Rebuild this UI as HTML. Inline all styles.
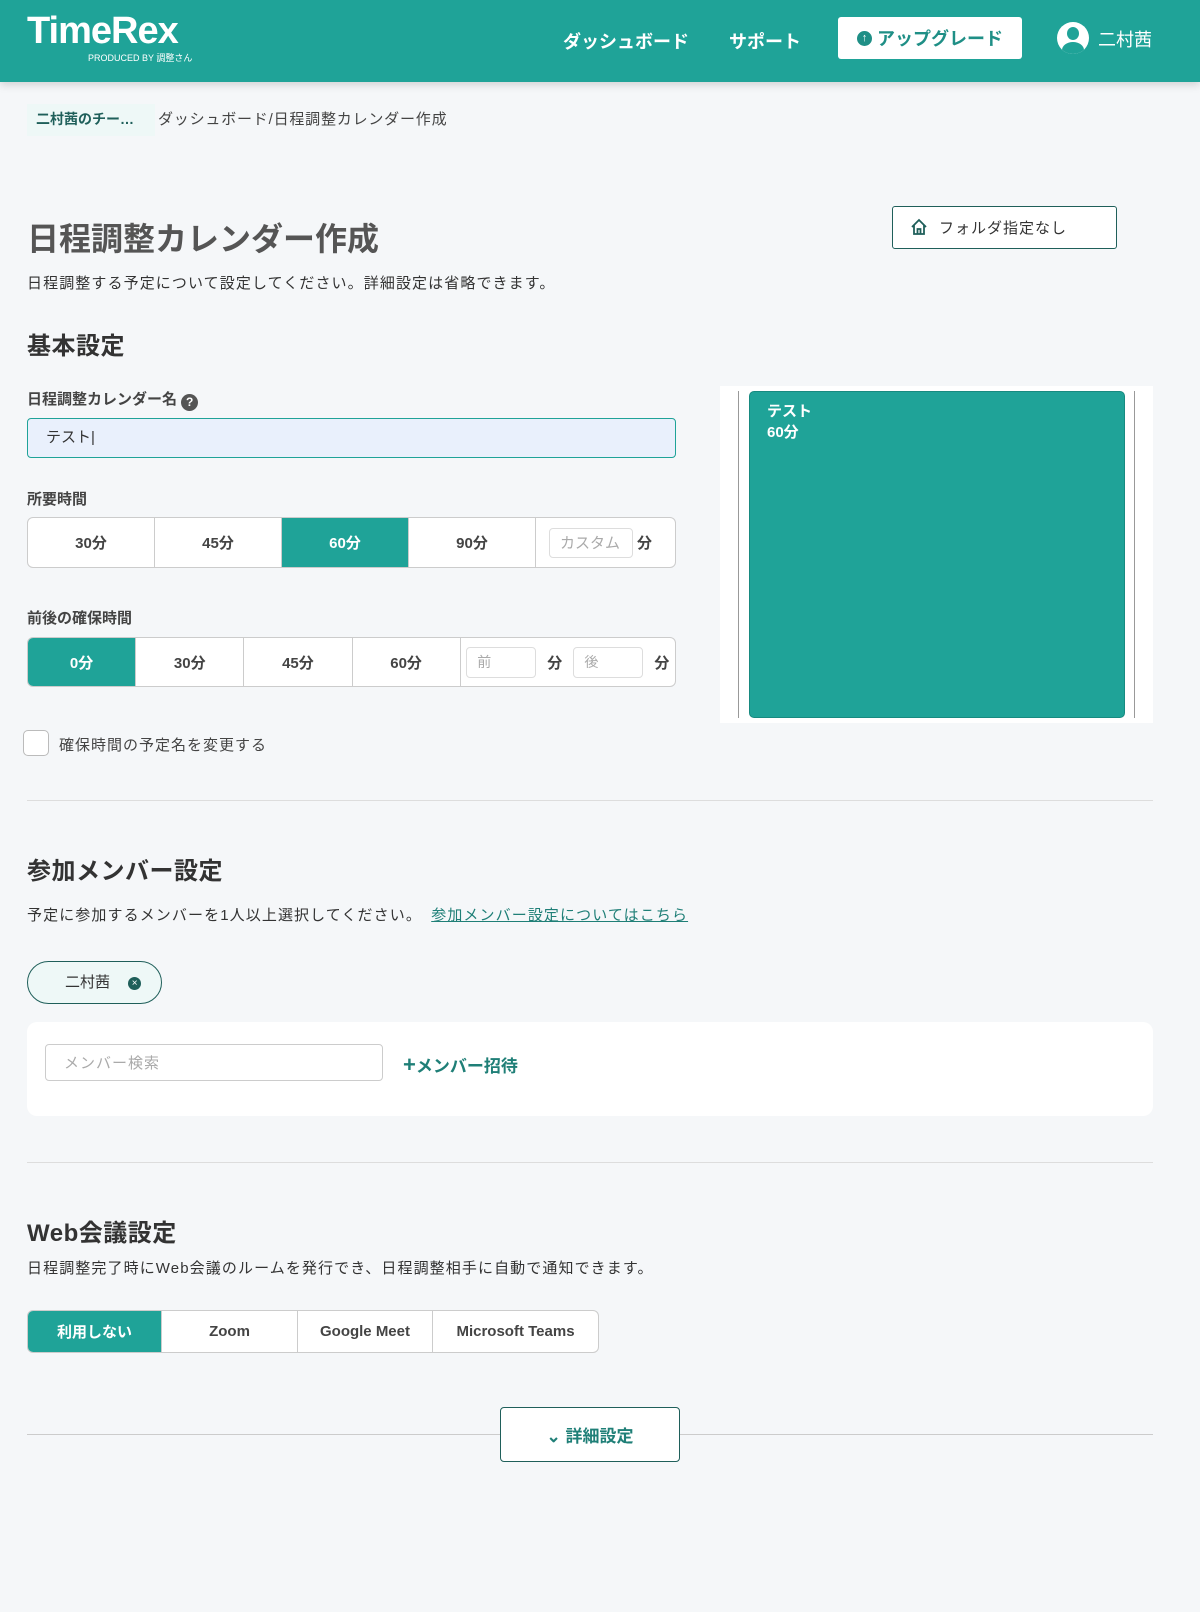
<!DOCTYPE html>
<html><head><meta charset="utf-8"><style>
*{box-sizing:border-box;margin:0;padding:0}
body{width:1200px;height:1612px;background:#f5f7f9;font-family:"Liberation Sans","Noto Sans CJK JP",sans-serif;color:#333;position:relative;overflow:hidden}
.a{position:absolute}
.hdr{left:0;top:0;width:1200px;height:82px;background:#1fa398;box-shadow:0 3px 8px rgba(0,0,0,.15)}
.bg{display:flex;border:1px solid #ccc;border-radius:6px;background:#fff;overflow:hidden}
.bg>div{flex:1;display:flex;align-items:center;justify-content:center;font-weight:bold;font-size:15px;color:#444;border-right:1px solid #ccc}
.bg>div:last-child{border-right:none}
.bg .on{background:#1fa398;color:#fff}
.inp{border:1px solid #ddd;border-radius:4px;color:#aaa;font-size:14px;padding-left:10px;display:flex;align-items:center;background:#fff}
h2{font-size:24px;font-weight:bold;color:#333;letter-spacing:.5px}
.lbl{font-size:15px;font-weight:bold;color:#444}
.t{font-size:15px;color:#333;letter-spacing:1.1px}
</style></head><body>
<div class="a hdr">
 <div class="a" style="left:27px;top:10px;color:#fff;font-size:38px;font-weight:bold;letter-spacing:-1px">TimeRex</div>
 <div class="a" style="left:88px;top:51px;color:#fff;font-size:9px">PRODUCED BY 調整さん</div>
 <div class="a" style="left:563px;top:28px;color:#fff;font-size:18px;font-weight:bold">ダッシュボード</div>
 <div class="a" style="left:729px;top:28px;color:#fff;font-size:18px;font-weight:bold">サポート</div>
 <div class="a" style="left:838px;top:17px;width:184px;height:42px;background:#fff;border-radius:3px;color:#1f8f86;font-size:18px;font-weight:bold;display:flex;align-items:center;justify-content:center"><span style="display:inline-block;width:15px;height:15px;border-radius:50%;background:#1f8f86;color:#fff;font-size:11px;line-height:15px;text-align:center;margin-right:5px">↑</span>アップグレード</div>
 <div class="a" style="left:1057px;top:22px;width:32px;height:32px;border-radius:50%;background:#fff;overflow:hidden"><div class="a" style="left:10px;top:5px;width:12px;height:13px;border-radius:50%;background:#1fa398"></div><div class="a" style="left:5px;top:20px;width:22px;height:16px;border-radius:50%;background:#1fa398"></div></div>
 <div class="a" style="left:1098px;top:26px;color:#fff;font-size:18px">二村茜</div>
</div>
<div class="a" style="left:27px;top:104px;width:128px;height:32px;background:#eef8f7"></div>
<div class="a" style="left:36px;top:109px;font-size:14px;font-weight:bold;color:#1f5f5a">二村茜のチー…</div>
<div class="a" style="left:158px;top:108px;color:#444;font-size:15px;letter-spacing:.8px">ダッシュボード/日程調整カレンダー作成</div>
<div class="a" style="left:27px;top:214px;font-size:32px;font-weight:bold;color:#555">日程調整カレンダー作成</div>
<div class="a" style="left:892px;top:206px;width:225px;height:43px;border:1px solid #1f5f5a;border-radius:3px;background:#fff;font-size:15px;color:#333;display:flex;align-items:center;padding-left:46px;letter-spacing:1px">フォルダ指定なし</div>
<svg class="a" style="left:910px;top:218px" width="18" height="18" viewBox="0 0 18 18"><path d="M2 9 L9 2 L16 9 M4 7 V16 H14 V7 M7.5 16 V11 H10.5 V16" fill="none" stroke="#1f5f5a" stroke-width="1.8"/></svg>
<div class="a t" style="left:27px;top:272px">日程調整する予定について設定してください。詳細設定は省略できます。</div>
<h2 class="a" style="left:27px;top:326px">基本設定</h2>
<div class="a lbl" style="left:27px;top:388px">日程調整カレンダー名 <span style="display:inline-block;width:17px;height:17px;border-radius:50%;background:#555;color:#fff;font-size:12px;text-align:center;line-height:17px;vertical-align:-2px">?</span></div>
<div class="a" style="left:27px;top:418px;width:649px;height:40px;border:1px solid #1fa398;border-radius:4px;background:#e9f0fc;font-size:15px;padding-left:18px;line-height:38px">テスト|</div>
<div class="a lbl" style="left:27px;top:488px">所要時間</div>
<div class="a bg" style="left:27px;top:517px;width:649px;height:51px"><div>30分</div><div>45分</div><div class="on">60分</div><div>90分</div><div style="justify-content:flex-start;padding-left:13px;font-weight:bold"><span class="inp" style="width:84px;height:30px;font-weight:normal;font-size:15px;margin-right:4px">カスタム</span>分</div></div>
<div class="a lbl" style="left:27px;top:607px">前後の確保時間</div>
<div class="a bg" style="left:27px;top:637px;width:649px;height:50px"><div class="on">0分</div><div>30分</div><div>45分</div><div>60分</div><div style="flex:2;justify-content:space-around"><span class="inp" style="width:70px;height:31px;font-weight:normal">前</span>分<span class="inp" style="width:70px;height:31px;font-weight:normal">後</span>分</div></div>
<div class="a" style="left:23px;top:730px;width:26px;height:26px;border:1px solid #bbb;border-radius:5px;background:#fff"></div>
<div class="a" style="left:59px;top:734px;font-size:15px;color:#444;letter-spacing:1px">確保時間の予定名を変更する</div>
<div class="a" style="left:720px;top:386px;width:433px;height:337px;background:#fff"></div>
<div class="a" style="left:738px;top:391px;width:1px;height:327px;background:#999"></div>
<div class="a" style="left:1134px;top:391px;width:1px;height:327px;background:#999"></div>
<div class="a" style="left:749px;top:391px;width:376px;height:327px;background:#1fa398;border-radius:5px;border:1px solid #178a80;color:#fff;font-weight:bold;font-size:15px;padding:9px 17px;line-height:21px">テスト<br>60分</div>
<div class="a" style="left:27px;top:800px;width:1126px;height:1px;background:#ddd"></div>
<h2 class="a" style="left:27px;top:851px">参加メンバー設定</h2>
<div class="a t" style="left:27px;top:904px">予定に参加するメンバーを1人以上選択してください。 <span style="color:#1f7f77;text-decoration:underline;margin-left:4px">参加メンバー設定についてはこちら</span></div>
<div class="a" style="left:27px;top:961px;width:135px;height:43px;border:1px solid #1f5f5a;border-radius:22px;background:#eef8f7;font-size:15px;color:#333;padding-left:37px;line-height:41px">二村茜 <span style="display:inline-block;width:13px;height:13px;border-radius:50%;background:#1f5f5a;color:#fff;font-size:10px;line-height:13px;text-align:center;margin-left:14px;vertical-align:1px">×</span></div>
<div class="a" style="left:27px;top:1022px;width:1126px;height:94px;background:#fff;border-radius:10px"></div>
<div class="a inp" style="left:45px;top:1044px;width:338px;height:37px;border-color:#ccc;padding-left:18px;font-size:15px;letter-spacing:1px">メンバー検索</div>
<div class="a" style="left:403px;top:1052px;font-size:17px;font-weight:bold;color:#1f7f77"><span style="font-size:22px;line-height:17px">+</span>メンバー招待</div>
<div class="a" style="left:27px;top:1162px;width:1126px;height:1px;background:#ddd"></div>
<h2 class="a" style="left:27px;top:1213px">Web会議設定</h2>
<div class="a t" style="left:27px;top:1257px">日程調整完了時にWeb会議のルームを発行でき、日程調整相手に自動で通知できます。</div>
<div class="a bg" style="left:27px;top:1310px;width:572px;height:43px"><div class="on" style="flex:0 0 134px">利用しない</div><div style="flex:0 0 136px">Zoom</div><div style="flex:0 0 135px">Google Meet</div><div>Microsoft Teams</div></div>
<div class="a" style="left:27px;top:1434px;width:1126px;height:1px;background:#ccc"></div>
<div class="a" style="left:500px;top:1407px;width:180px;height:55px;border:1px solid #1f5f5a;border-radius:4px;background:#fff;color:#1f7f77;font-weight:bold;font-size:17px;display:flex;align-items:center;justify-content:center">⌄ 詳細設定</div>
</body></html>
